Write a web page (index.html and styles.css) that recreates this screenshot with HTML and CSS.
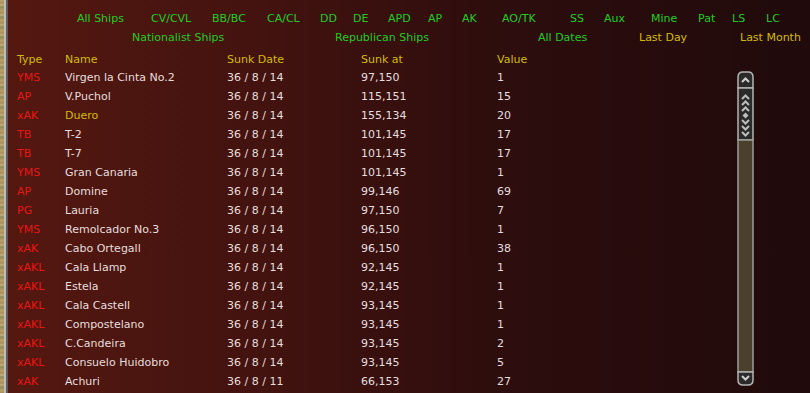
FILE: index.html
```html
<!DOCTYPE html>
<html lang="en">
<head>
    <meta charset="utf-8" />
    <title>Ships Sunk</title>
    <link rel="stylesheet" href="styles.css">
</head>
<body>
<div class="frame">
    <div class="map"></div>
    <div class="panel">
        <div class="filters types">
            <span>All Ships</span><span>CV/CVL</span><span>BB/BC</span><span>CA/CL</span><span>DD</span><span>DE</span><span>APD</span><span>AP</span><span>AK</span><span>AO/TK</span><span>SS</span><span>Aux</span><span>Mine</span><span>Pat</span><span>LS</span><span>LC</span>
        </div>
        <div class="filters sides">
            <span>Nationalist Ships</span><span>Republican Ships</span><span>All Dates</span><span class="off">Last Day</span><span class="off">Last Month</span>
        </div>
        <div class="row head">
            <span>Type</span><span>Name</span><span>Sunk Date</span><span>Sunk at</span><span>Value</span>
        </div>
        <div class="listBody">
            <div class="rows">
                <div class="row"><span class="t">YMS</span><span>Virgen la Cinta No.2</span><span>36 / 8 / 14</span><span>97,150</span><span>1</span></div>
                <div class="row"><span class="t">AP</span><span>V.Puchol</span><span>36 / 8 / 14</span><span>115,151</span><span>15</span></div>
                <div class="row"><span class="t">xAK</span><span class="hl">Duero</span><span>36 / 8 / 14</span><span>155,134</span><span>20</span></div>
                <div class="row"><span class="t">TB</span><span>T-2</span><span>36 / 8 / 14</span><span>101,145</span><span>17</span></div>
                <div class="row"><span class="t">TB</span><span>T-7</span><span>36 / 8 / 14</span><span>101,145</span><span>17</span></div>
                <div class="row"><span class="t">YMS</span><span>Gran Canaria</span><span>36 / 8 / 14</span><span>101,145</span><span>1</span></div>
                <div class="row"><span class="t">AP</span><span>Domine</span><span>36 / 8 / 14</span><span>99,146</span><span>69</span></div>
                <div class="row"><span class="t">PG</span><span>Lauria</span><span>36 / 8 / 14</span><span>97,150</span><span>7</span></div>
                <div class="row"><span class="t">YMS</span><span>Remolcador No.3</span><span>36 / 8 / 14</span><span>96,150</span><span>1</span></div>
                <div class="row"><span class="t">xAK</span><span>Cabo Ortegall</span><span>36 / 8 / 14</span><span>96,150</span><span>38</span></div>
                <div class="row"><span class="t">xAKL</span><span>Cala Llamp</span><span>36 / 8 / 14</span><span>92,145</span><span>1</span></div>
                <div class="row"><span class="t">xAKL</span><span>Estela</span><span>36 / 8 / 14</span><span>92,145</span><span>1</span></div>
                <div class="row"><span class="t">xAKL</span><span>Cala Castell</span><span>36 / 8 / 14</span><span>93,145</span><span>1</span></div>
                <div class="row"><span class="t">xAKL</span><span>Compostelano</span><span>36 / 8 / 14</span><span>93,145</span><span>1</span></div>
                <div class="row"><span class="t">xAKL</span><span>C.Candeira</span><span>36 / 8 / 14</span><span>93,145</span><span>2</span></div>
                <div class="row"><span class="t">xAKL</span><span>Consuelo Huidobro</span><span>36 / 8 / 14</span><span>93,145</span><span>5</span></div>
                <div class="row"><span class="t">xAK</span><span>Achuri</span><span>36 / 8 / 11</span><span>66,153</span><span>27</span></div>
            </div>
            <svg class="scroll" width="17" height="315" viewBox="0 0 17 315">
                <!-- up button -->
                <path d="M1 17 V6 Q1 1 6 1 H11 Q16 1 16 6 V17 Z" fill="#2b2b2b" stroke="#b4b4b4" stroke-width="1.5"/>
                <polyline points="5,11 8.5,7.5 12,11" fill="none" stroke="#cfcfcf" stroke-width="2"/>
                <!-- thumb -->
                <rect x="1" y="17" width="15" height="52" fill="#2a2a2a" stroke="#b4b4b4" stroke-width="1.5"/>
                <g fill="none" stroke="#bdbdbd" stroke-width="2">
                    <polyline points="5,28 8.5,24.5 12,28"/>
                    <polyline points="5,34 8.5,30.5 12,34"/>
                    <polyline points="5,40 8.5,36.5 12,40"/>
                    <polyline points="5,49 8.5,52.5 12,49"/>
                    <polyline points="5,55 8.5,58.5 12,55"/>
                    <polyline points="5,61 8.5,64.5 12,61"/>
                </g>
                <path d="M8.5 41.5 L11.5 44.5 L8.5 47.5 L5.5 44.5 Z" fill="#bdbdbd"/>
                <!-- track -->
                <rect x="1" y="69" width="15" height="232" fill="#4b402c" stroke="#9c9c9c" stroke-width="1.5"/>
                <!-- down button -->
                <path d="M1 301 V309 Q1 314 6 314 H11 Q16 314 16 309 V301 Z" fill="#2b2b2b" stroke="#b4b4b4" stroke-width="1.5"/>
                <polyline points="5,305 8.5,308.5 12,305" fill="none" stroke="#cfcfcf" stroke-width="2"/>
            </svg>
        </div>
    </div>
</div>
</body>
</html>
```

FILE: styles.css
```css
html, body { margin: 0; padding: 0; }
body { width: 810px; height: 393px; overflow: hidden; background: #220b0c; font-family: "DejaVu Sans", "Liberation Sans", sans-serif; font-size: 11px; }

.frame { display: flex; height: 393px; }
.map { width: 4px; background: repeating-linear-gradient(180deg, #bca46e 0px, #a88f5c 3px, #c6b07c 5px, #8f8a5a 7px, #b59c66 10px); }
.panel { flex: 1; padding-top: 9px; border-left: 2px solid #bdbdbd; box-shadow: inset 2px 0 0 #5c5c5c; background: linear-gradient(to right, #541810 0%, #44130f 30%, #2e0d0d 60%, #200a0b 100%); }

.filters { display: grid; line-height: 19px; color: #22cc22; white-space: nowrap; }
.filters.types { padding-left: 71px; grid-template-columns: 74px 61px 55px 53px 33px 35px 40px 34px 40px 68px 34px 47px 47px 34px 34px auto; }
.filters.sides { padding-left: 126px; grid-template-columns: 203px 203px 101px 101px auto; }
.filters .off { color: #d2bc00; }

.row { display: grid; padding-left: 11px; grid-template-columns: 48px 162px 134px 136px auto; line-height: 19px; color: #e6dede; white-space: nowrap; }
.row.head { margin-top: 5px; line-height: 16px; color: #d2bc00; }
.row .t { color: #e81616; }
.row .hl { color: #d2bc00; }

.listBody { display: flex; }
.rows { flex: 1; }
.scroll { flex: none; margin: 3px 56px 0 0; }
```
